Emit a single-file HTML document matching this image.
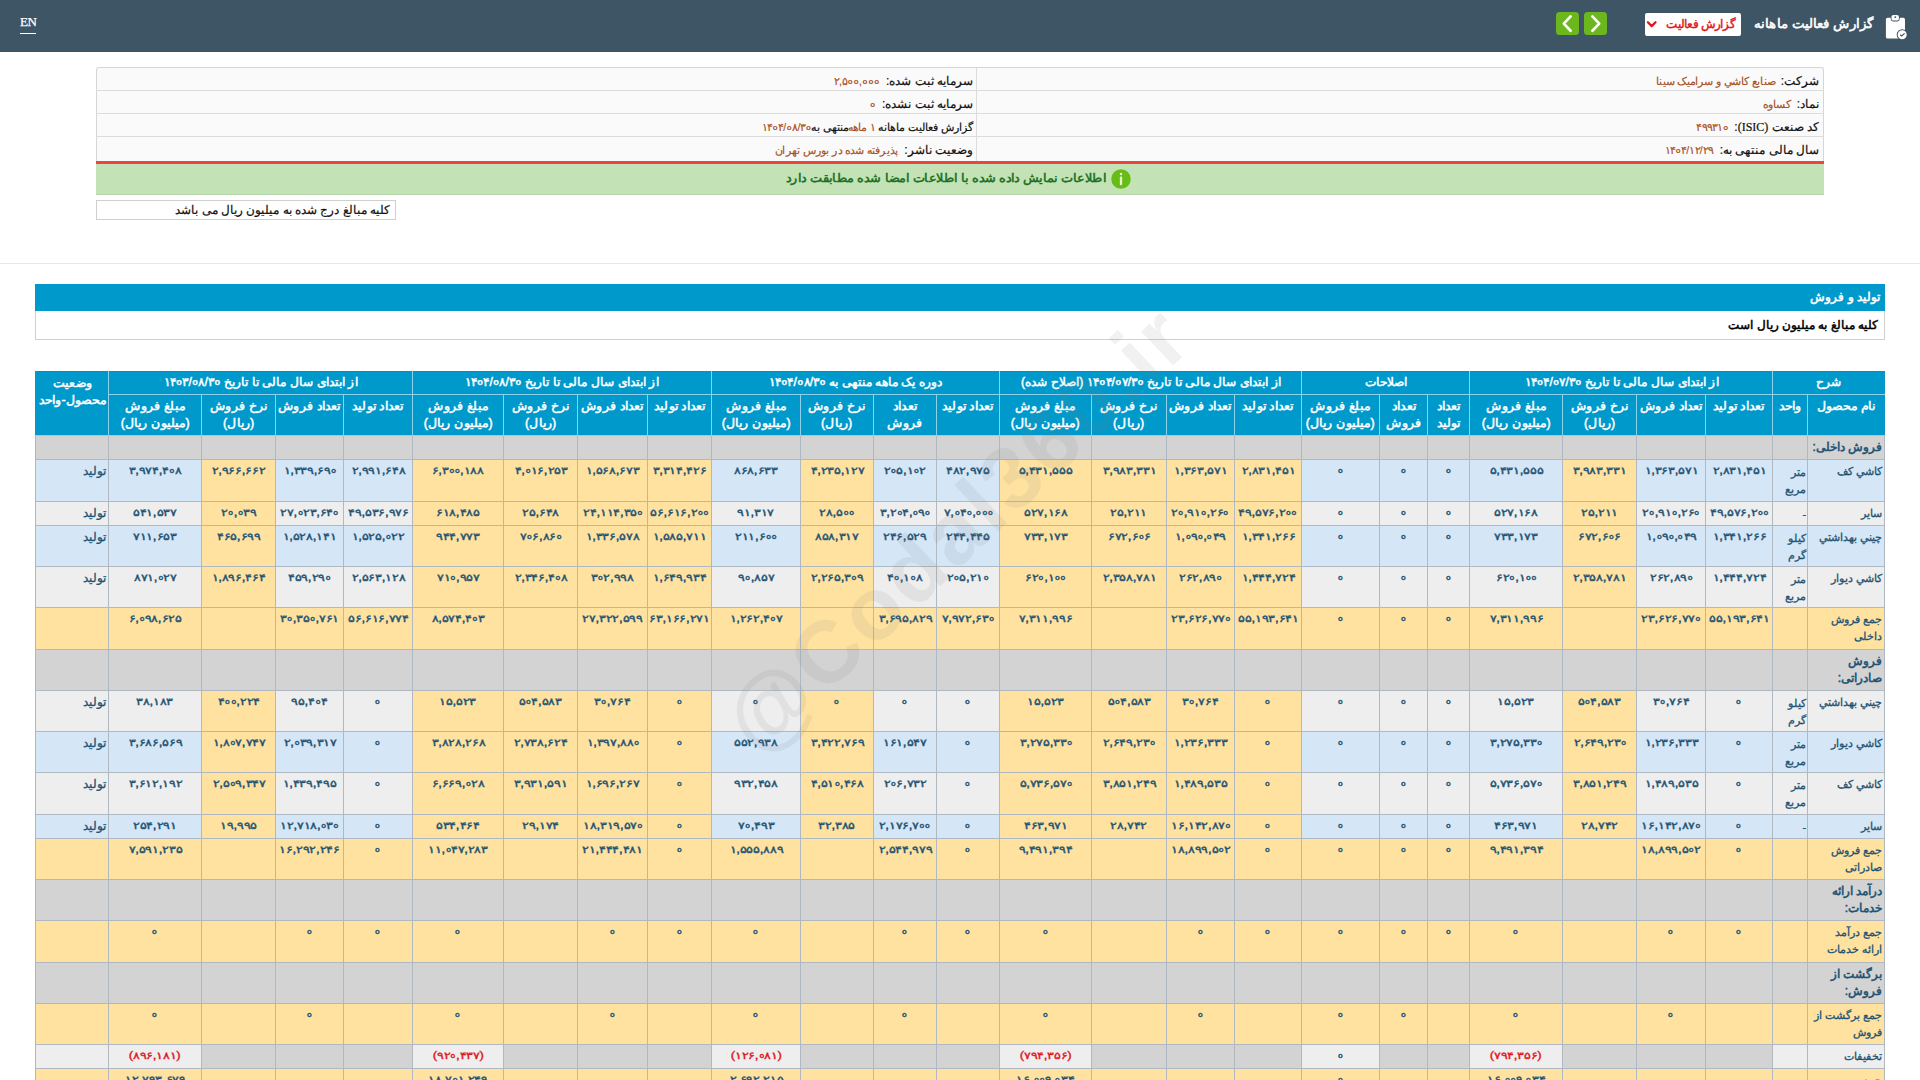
<!DOCTYPE html>
<html lang="fa" dir="rtl">
<head>
<meta charset="utf-8">
<title>گزارش فعالیت ماهانه</title>
<style>
html,body{margin:0;padding:0;}
body{width:1920px;height:1080px;overflow:hidden;background:#fff;position:relative;
  font-family:"Liberation Sans",sans-serif;direction:rtl;color:#000;}
.abs{position:absolute;box-sizing:border-box;}
#bar{left:0;top:0;width:1920px;height:52px;background:#3d5564;}
#en{left:20px;top:15.4px;direction:ltr;font-family:"Liberation Serif",serif;font-size:13px;line-height:14px;color:#fff;
  border-bottom:1px solid #fff;padding-bottom:3.6px;letter-spacing:-0.5px;-webkit-text-stroke:0.25px #fff;}
#title{right:47px;top:11px;height:26px;line-height:25px;font-size:13px;transform:scaleX(1.025);transform-origin:100% 50%;font-weight:normal;-webkit-text-stroke:0.55px #fff;color:#fff;white-space:nowrap;}
#dd{left:1645px;top:13px;width:96px;height:23px;background:#fff;border-radius:2px;color:#e0161c;font-size:11px;-webkit-text-stroke:0.4px #e0161c;
  line-height:22px;white-space:nowrap;text-align:right;padding-right:6px;}
.btn{top:12px;width:23px;height:23px;background:#6cb61e;border-radius:3px;}
#dd span{display:inline-block;transform:scale(1.06);transform-origin:100% 55%;}
.btn{border-radius:3.5px;}
#info{left:96px;top:67px;width:1728px;height:94px;background:#fafafa;border:1px solid #d6d6d6;border-bottom:none;border-radius:3px 3px 0 0;}
.il{left:96px;width:1728px;height:1px;background:#dcdcdc;}
.iv{position:absolute;white-space:nowrap;font-size:12px;line-height:26px;height:23px;color:#111;-webkit-text-stroke:0.2px #111;}
.iv b{font-weight:normal;color:#a8501f;-webkit-text-stroke:0.15px #a8501f;font-size:10px;margin-right:6px;display:inline-block;transform:scale(1.05);transform-origin:100% 60%;}
#red{left:96px;top:161px;width:1728px;height:3px;background:#e8463f;}
#green{left:96px;top:164px;width:1728px;height:31px;background:#c3e3b6;border-bottom:1px solid #b5d3a9;}
#gtxt{right:814px;top:164px;height:30px;line-height:29.5px;text-align:right;font-size:12px;transform:scaleX(1.07);transform-origin:100% 50%;font-weight:normal;-webkit-text-stroke:0.5px #1b6f1f;color:#1b6f1f;white-space:nowrap;}
#note{left:96px;top:200px;width:300px;height:20px;border:1px solid #cfcfcf;background:#fff;font-size:12px;line-height:18px;
  padding-right:5px;white-space:nowrap;text-align:right;color:#111;-webkit-text-stroke:0.2px #111;}
#hr{left:0;top:263px;width:1920px;height:1px;background:#e8e8e8;}
#sect{left:35px;top:284px;width:1850px;height:27px;background:#0099cc;color:#fff;font-weight:normal;-webkit-text-stroke:0.55px #fff;font-size:12px;
  line-height:27px;padding-right:5px;text-align:right;white-space:nowrap;}
#sub{left:35px;top:311px;width:1850px;height:29px;background:#fff;border:1px solid #cfcfcf;border-top:none;color:#000;font-weight:normal;-webkit-text-stroke:0.5px #000;
  font-size:12px;line-height:28px;padding-right:6px;text-align:right;white-space:nowrap;}
#tbl{position:absolute;left:35px;top:371px;width:1850px;table-layout:fixed;border-collapse:collapse;direction:rtl;}
#tbl th,#tbl td{box-sizing:border-box;padding:0;overflow:hidden;white-space:nowrap;}
#tbl th{background:#0099cc;color:#fff;font-weight:normal;-webkit-text-stroke:0.5px #fff;font-size:12px;line-height:17px;text-align:center;vertical-align:middle;
  border:1px solid #8fd0ea;padding:0;}
#tbl th.vt{vertical-align:top;padding-top:3px;}
#tbl th .h{display:inline-block;transform:scaleX(1.015);}
#tbl th.vt .h{transform:scaleX(1.04);}
#tbl thead tr:first-child th{border-top-color:#1987b3;}
#tbl thead tr:first-child th:not(.vt) .h{position:relative;top:-1px;}
#tbl thead th:first-child{border-right-color:#0d93c4;}
#tbl thead tr:first-child th:last-child{border-left-color:#0d93c4;}
#tbl td{border:1px solid #b0b8c1;color:#1d5273;font-size:12px;-webkit-text-stroke:0.3px #1d5273;line-height:17px;vertical-align:top;text-align:center;padding-top:3px;}
#tbl td.nm,#tbl td.sn{text-align:right;padding-right:2px;font-size:11px;}
#tbl td.sn{font-weight:normal;font-size:12px;-webkit-text-stroke:0.55px #1d5273;}
#tbl td.un{text-align:right;padding-right:1px;padding-top:4px;font-size:11px;}
#tbl td.st{text-align:right;padding-right:2px;font-size:12px;}
#tbl td.n bdo{-webkit-text-stroke:0.45px #1d5273;display:inline-block;transform:scale(1.1,0.87);transform-origin:50% 37%;}
#tbl td.r bdo{color:#e0141b;-webkit-text-stroke:0.4px #e0141b;}
.z{font-size:0;line-height:0;font-style:normal;-webkit-text-stroke:0;}
.z::before{content:"o";display:inline-block;font:bold 7.8px/0 "Liberation Sans",sans-serif;vertical-align:2.1px;
  transform:scale(.91,1.15);margin:0 .25px;-webkit-text-stroke:0.25px currentColor;}
.zr::before{transform:none;font-size:9px;vertical-align:1.0px;margin:0 .5px;}
.iv .zr::before{font-size:7.6px;vertical-align:1.4px;-webkit-text-stroke:0;}
#wm{position:absolute;left:957px;top:529px;width:0;height:0;direction:ltr;pointer-events:none;
  font-weight:bold;font-size:88px;line-height:0;letter-spacing:3.5px;color:rgba(128,128,128,0.11);white-space:nowrap;
  transform:rotate(-43.5deg);display:flex;justify-content:center;align-items:center;}

</style>
</head>
<body>
<div id="bar" class="abs"></div>
<div id="en" class="abs">EN</div>
<svg class="abs" style="left:1880px;top:10px" width="36" height="34" viewBox="0 0 36 34">
  <rect x="5.9" y="7.85" width="19.1" height="20.75" rx="1.7" fill="#fff"/>
  <rect x="10.7" y="4.1" width="9" height="7.3" rx="2.4" fill="#3d5564"/>
  <rect x="11.5" y="4.9" width="7.4" height="5.7" rx="1.9" fill="#fff"/>
  <circle cx="15.3" cy="7.1" r="0.95" fill="#3d5564"/>
  <circle cx="22.2" cy="24.7" r="5.5" fill="#3d5564"/>
  <circle cx="22.2" cy="24.7" r="4.5" fill="#fff"/>
  <path d="M20.1 24.7 L21.7 25.9 L24.6 23.4" fill="none" stroke="#3d5564" stroke-width="1.2"/>
</svg>
<div id="title" class="abs">گزارش فعالیت ماهانه</div>
<div id="dd" class="abs"><span>گزارش فعالیت</span></div>
<svg class="abs" style="left:1646px;top:20px" width="12" height="9" viewBox="0 0 12 9"><path d="M1.9 2.3 L5.7 6.1 L9.5 2.3" fill="none" stroke="#e0161c" stroke-width="2.3" stroke-linecap="round" stroke-linejoin="round"/></svg>
<div class="abs btn" style="left:1584px"></div>
<div class="abs btn" style="left:1556px"></div>
<svg class="abs" style="left:1584px;top:12px" width="23" height="23" viewBox="0 0 23 23"><path d="M8.4 4.4 L15.2 11.6 L8.4 18.8" fill="none" stroke="#fff" stroke-width="2.7" stroke-linecap="round" stroke-linejoin="round"/></svg>
<svg class="abs" style="left:1556px;top:12px" width="23" height="23" viewBox="0 0 23 23"><path d="M14.6 4.4 L7.8 11.6 L14.6 18.8" fill="none" stroke="#fff" stroke-width="2.7" stroke-linecap="round" stroke-linejoin="round"/></svg>

<div id="info" class="abs"></div>
<div class="abs il" style="top:90px"></div>
<div class="abs il" style="top:113px"></div>
<div class="abs il" style="top:136px"></div>
<div class="abs" style="left:976px;top:68px;width:1px;height:93px;background:#dcdcdc"></div>
<div class="iv" style="right:101px;top:68px">شرکت:<b>صنایع کاشي و سرامیک سینا</b></div>
<div class="iv" style="right:101px;top:91px">نماد:<b>کساوه</b></div>
<div class="iv" style="right:101px;top:114px">کد صنعت <span style="font-family:'Liberation Serif',serif">(ISIC)</span>:<b><bdo dir="ltr">۴۹۹۳۱<i class="z zr">۰</i></bdo></b></div>
<div class="iv" style="right:101px;top:137px">سال مالی منتهی به:<b><bdo dir="ltr">۱۴<i class="z zr">۰</i>۴/۱۲/۲۹</bdo></b></div>
<div class="iv" style="right:947px;top:68px">سرمایه ثبت شده:<b><bdo dir="ltr">۲,۵<i class="z zr">۰</i><i class="z zr">۰</i>,<i class="z zr">۰</i><i class="z zr">۰</i><i class="z zr">۰</i></bdo></b></div>
<div class="iv" style="right:947px;top:91px">سرمایه ثبت نشده:<b><bdo dir="ltr"><i class="z zr">۰</i></bdo></b></div>
<div class="iv" style="right:947px;top:114px;font-size:11px">گزارش فعالیت ماهانه <b style="margin:0">۱ ماهه</b>منتهی به<b style="margin:0"><bdo dir="ltr">۱۴<i class="z zr">۰</i>۴/<i class="z zr">۰</i>۸/۳<i class="z zr">۰</i></bdo></b></div>
<div class="iv" style="right:947px;top:137px">وضعیت ناشر:<b>پذیرفته شده در بورس تهران</b></div>
<div id="red" class="abs"></div>
<div id="green" class="abs"></div>
<div id="gtxt" class="abs">اطلاعات نمایش داده شده با اطلاعات امضا شده مطابقت دارد</div>
<svg class="abs" style="left:1111px;top:169px" width="20" height="20" viewBox="0 0 20 20"><circle cx="10" cy="10" r="9.75" fill="#68bc18"/><circle cx="10" cy="4.9" r="1.25" fill="#e4f4cc"/><rect x="8.85" y="7.6" width="2.3" height="8.6" rx="0.9" fill="#e4f4cc"/></svg>
<div id="note" class="abs">کلیه مبالغ درج شده به میلیون ریال می باشد</div>
<div id="hr" class="abs"></div>
<div id="sect" class="abs">تولید و فروش</div>
<div id="sub" class="abs">کلیه مبالغ به میلیون ریال است</div>

<table id="tbl">
<colgroup><col style="width:77px"><col style="width:35px"><col style="width:67px"><col style="width:69px"><col style="width:74px"><col style="width:93px"><col style="width:42px"><col style="width:48px"><col style="width:78px"><col style="width:67px"><col style="width:68px"><col style="width:75px"><col style="width:92px"><col style="width:63px"><col style="width:63px"><col style="width:73px"><col style="width:89px"><col style="width:64px"><col style="width:70px"><col style="width:74px"><col style="width:91px"><col style="width:69px"><col style="width:68px"><col style="width:74px"><col style="width:93px"><col style="width:73px"></colgroup>
<thead>
<tr style="height:23px"><th colspan="2"><span class="h">شرح</span></th><th colspan="4"><span class="h">از ابتدای سال مالی تا تاریخ <bdo dir="ltr">۱۴<i class="z zr">۰</i>۴/<i class="z zr">۰</i>۷/۳<i class="z zr">۰</i></bdo></span></th><th colspan="3"><span class="h">اصلاحات</span></th><th colspan="4"><span class="h">از ابتدای سال مالی تا تاریخ <bdo dir="ltr">۱۴<i class="z zr">۰</i>۴/<i class="z zr">۰</i>۷/۳<i class="z zr">۰</i></bdo> (اصلاح شده)</span></th><th colspan="4"><span class="h">دوره یک ماهه منتهی به <bdo dir="ltr">۱۴<i class="z zr">۰</i>۴/<i class="z zr">۰</i>۸/۳<i class="z zr">۰</i></bdo></span></th><th colspan="4"><span class="h">از ابتدای سال مالی تا تاریخ <bdo dir="ltr">۱۴<i class="z zr">۰</i>۴/<i class="z zr">۰</i>۸/۳<i class="z zr">۰</i></bdo></span></th><th colspan="4"><span class="h">از ابتدای سال مالی تا تاریخ <bdo dir="ltr">۱۴<i class="z zr">۰</i>۳/<i class="z zr">۰</i>۸/۳<i class="z zr">۰</i></bdo></span></th><th rowspan="2" class="vt"><span class="h">وضعیت<br>محصول-واحد</span></th></tr>
<tr style="height:41px"><th class="vt"><span class="h">نام محصول</span></th><th class="vt"><span class="h">واحد</span></th><th class="vt"><span class="h">تعداد تولید</span></th><th class="vt"><span class="h">تعداد فروش</span></th><th class="vt"><span class="h">نرخ فروش<br>(ریال)</span></th><th class="vt"><span class="h">مبلغ فروش<br>(میلیون ریال)</span></th><th class="vt"><span class="h">تعداد<br>تولید</span></th><th class="vt"><span class="h">تعداد<br>فروش</span></th><th class="vt"><span class="h">مبلغ فروش<br>(میلیون ریال)</span></th><th class="vt"><span class="h">تعداد تولید</span></th><th class="vt"><span class="h">تعداد فروش</span></th><th class="vt"><span class="h">نرخ فروش<br>(ریال)</span></th><th class="vt"><span class="h">مبلغ فروش<br>(میلیون ریال)</span></th><th class="vt"><span class="h">تعداد تولید</span></th><th class="vt"><span class="h">تعداد<br>فروش</span></th><th class="vt"><span class="h">نرخ فروش<br>(ریال)</span></th><th class="vt"><span class="h">مبلغ فروش<br>(میلیون ریال)</span></th><th class="vt"><span class="h">تعداد تولید</span></th><th class="vt"><span class="h">تعداد فروش</span></th><th class="vt"><span class="h">نرخ فروش<br>(ریال)</span></th><th class="vt"><span class="h">مبلغ فروش<br>(میلیون ریال)</span></th><th class="vt"><span class="h">تعداد تولید</span></th><th class="vt"><span class="h">تعداد فروش</span></th><th class="vt"><span class="h">نرخ فروش<br>(ریال)</span></th><th class="vt"><span class="h">مبلغ فروش<br>(میلیون ریال)</span></th></tr>
</thead>
<tbody>
<tr style="height:24px"><td class="sn" style="background:#d3d3d3">فروش داخلی:</td><td style="background:#d3d3d3"></td><td style="background:#d3d3d3"></td><td style="background:#d3d3d3"></td><td style="background:#d3d3d3"></td><td style="background:#d3d3d3"></td><td style="background:#d3d3d3"></td><td style="background:#d3d3d3"></td><td style="background:#d3d3d3"></td><td style="background:#d3d3d3"></td><td style="background:#d3d3d3"></td><td style="background:#d3d3d3"></td><td style="background:#d3d3d3"></td><td style="background:#d3d3d3"></td><td style="background:#d3d3d3"></td><td style="background:#d3d3d3"></td><td style="background:#d3d3d3"></td><td style="background:#d3d3d3"></td><td style="background:#d3d3d3"></td><td style="background:#d3d3d3"></td><td style="background:#d3d3d3"></td><td style="background:#d3d3d3"></td><td style="background:#d3d3d3"></td><td style="background:#d3d3d3"></td><td style="background:#d3d3d3"></td><td style="background:#d3d3d3"></td></tr>
<tr style="height:42px"><td class="nm" style="background:#d5e6f6">کاشي کف</td><td class="un" style="background:#d5e6f6">متر<br>مربع</td><td class="n" style="background:#d5e6f6"><bdo dir="ltr">۲,۸۳۱,۴۵۱</bdo></td><td class="n" style="background:#d5e6f6"><bdo dir="ltr">۱,۳۶۳,۵۷۱</bdo></td><td class="n" style="background:#ffe2a0"><bdo dir="ltr">۳,۹۸۳,۳۳۱</bdo></td><td class="n" style="background:#d5e6f6"><bdo dir="ltr">۵,۴۳۱,۵۵۵</bdo></td><td class="n" style="background:#d5e6f6"><bdo dir="ltr"><i class="z">۰</i></bdo></td><td class="n" style="background:#d5e6f6"><bdo dir="ltr"><i class="z">۰</i></bdo></td><td class="n" style="background:#d5e6f6"><bdo dir="ltr"><i class="z">۰</i></bdo></td><td class="n" style="background:#ffe2a0"><bdo dir="ltr">۲,۸۳۱,۴۵۱</bdo></td><td class="n" style="background:#ffe2a0"><bdo dir="ltr">۱,۳۶۳,۵۷۱</bdo></td><td class="n" style="background:#ffe2a0"><bdo dir="ltr">۳,۹۸۳,۳۳۱</bdo></td><td class="n" style="background:#ffe2a0"><bdo dir="ltr">۵,۴۳۱,۵۵۵</bdo></td><td class="n" style="background:#d5e6f6"><bdo dir="ltr">۴۸۲,۹۷۵</bdo></td><td class="n" style="background:#d5e6f6"><bdo dir="ltr">۲<i class="z">۰</i>۵,۱<i class="z">۰</i>۲</bdo></td><td class="n" style="background:#ffe2a0"><bdo dir="ltr">۴,۲۳۵,۱۲۷</bdo></td><td class="n" style="background:#d5e6f6"><bdo dir="ltr">۸۶۸,۶۳۳</bdo></td><td class="n" style="background:#ffe2a0"><bdo dir="ltr">۳,۳۱۴,۴۲۶</bdo></td><td class="n" style="background:#ffe2a0"><bdo dir="ltr">۱,۵۶۸,۶۷۳</bdo></td><td class="n" style="background:#ffe2a0"><bdo dir="ltr">۴,<i class="z">۰</i>۱۶,۲۵۳</bdo></td><td class="n" style="background:#ffe2a0"><bdo dir="ltr">۶,۳<i class="z">۰</i><i class="z">۰</i>,۱۸۸</bdo></td><td class="n" style="background:#d5e6f6"><bdo dir="ltr">۲,۹۹۱,۶۴۸</bdo></td><td class="n" style="background:#d5e6f6"><bdo dir="ltr">۱,۳۳۹,۶۹<i class="z">۰</i></bdo></td><td class="n" style="background:#ffe2a0"><bdo dir="ltr">۲,۹۶۶,۶۶۲</bdo></td><td class="n" style="background:#d5e6f6"><bdo dir="ltr">۳,۹۷۴,۴<i class="z">۰</i>۸</bdo></td><td class="st" style="background:#d5e6f6">تولید</td></tr>
<tr style="height:24px"><td class="nm" style="background:#eeeeee">سایر</td><td class="un" style="background:#eeeeee">-</td><td class="n" style="background:#eeeeee"><bdo dir="ltr">۴۹,۵۷۶,۲<i class="z">۰</i><i class="z">۰</i></bdo></td><td class="n" style="background:#eeeeee"><bdo dir="ltr">۲<i class="z">۰</i>,۹۱<i class="z">۰</i>,۲۶<i class="z">۰</i></bdo></td><td class="n" style="background:#ffe2a0"><bdo dir="ltr">۲۵,۲۱۱</bdo></td><td class="n" style="background:#eeeeee"><bdo dir="ltr">۵۲۷,۱۶۸</bdo></td><td class="n" style="background:#eeeeee"><bdo dir="ltr"><i class="z">۰</i></bdo></td><td class="n" style="background:#eeeeee"><bdo dir="ltr"><i class="z">۰</i></bdo></td><td class="n" style="background:#eeeeee"><bdo dir="ltr"><i class="z">۰</i></bdo></td><td class="n" style="background:#ffe2a0"><bdo dir="ltr">۴۹,۵۷۶,۲<i class="z">۰</i><i class="z">۰</i></bdo></td><td class="n" style="background:#ffe2a0"><bdo dir="ltr">۲<i class="z">۰</i>,۹۱<i class="z">۰</i>,۲۶<i class="z">۰</i></bdo></td><td class="n" style="background:#ffe2a0"><bdo dir="ltr">۲۵,۲۱۱</bdo></td><td class="n" style="background:#ffe2a0"><bdo dir="ltr">۵۲۷,۱۶۸</bdo></td><td class="n" style="background:#eeeeee"><bdo dir="ltr">۷,<i class="z">۰</i>۴<i class="z">۰</i>,<i class="z">۰</i><i class="z">۰</i><i class="z">۰</i></bdo></td><td class="n" style="background:#eeeeee"><bdo dir="ltr">۳,۲<i class="z">۰</i>۴,<i class="z">۰</i>۹<i class="z">۰</i></bdo></td><td class="n" style="background:#ffe2a0"><bdo dir="ltr">۲۸,۵<i class="z">۰</i><i class="z">۰</i></bdo></td><td class="n" style="background:#eeeeee"><bdo dir="ltr">۹۱,۳۱۷</bdo></td><td class="n" style="background:#ffe2a0"><bdo dir="ltr">۵۶,۶۱۶,۲<i class="z">۰</i><i class="z">۰</i></bdo></td><td class="n" style="background:#ffe2a0"><bdo dir="ltr">۲۴,۱۱۴,۳۵<i class="z">۰</i></bdo></td><td class="n" style="background:#ffe2a0"><bdo dir="ltr">۲۵,۶۴۸</bdo></td><td class="n" style="background:#ffe2a0"><bdo dir="ltr">۶۱۸,۴۸۵</bdo></td><td class="n" style="background:#eeeeee"><bdo dir="ltr">۴۹,۵۳۶,۹۷۶</bdo></td><td class="n" style="background:#eeeeee"><bdo dir="ltr">۲۷,<i class="z">۰</i>۲۳,۶۴<i class="z">۰</i></bdo></td><td class="n" style="background:#ffe2a0"><bdo dir="ltr">۲<i class="z">۰</i>,<i class="z">۰</i>۳۹</bdo></td><td class="n" style="background:#eeeeee"><bdo dir="ltr">۵۴۱,۵۳۷</bdo></td><td class="st" style="background:#eeeeee">تولید</td></tr>
<tr style="height:41px"><td class="nm" style="background:#d5e6f6">چيني بهداشتي</td><td class="un" style="background:#d5e6f6">کیلو<br>گرم</td><td class="n" style="background:#d5e6f6"><bdo dir="ltr">۱,۳۴۱,۲۶۶</bdo></td><td class="n" style="background:#d5e6f6"><bdo dir="ltr">۱,<i class="z">۰</i>۹<i class="z">۰</i>,<i class="z">۰</i>۴۹</bdo></td><td class="n" style="background:#ffe2a0"><bdo dir="ltr">۶۷۲,۶<i class="z">۰</i>۶</bdo></td><td class="n" style="background:#d5e6f6"><bdo dir="ltr">۷۳۳,۱۷۳</bdo></td><td class="n" style="background:#d5e6f6"><bdo dir="ltr"><i class="z">۰</i></bdo></td><td class="n" style="background:#d5e6f6"><bdo dir="ltr"><i class="z">۰</i></bdo></td><td class="n" style="background:#d5e6f6"><bdo dir="ltr"><i class="z">۰</i></bdo></td><td class="n" style="background:#ffe2a0"><bdo dir="ltr">۱,۳۴۱,۲۶۶</bdo></td><td class="n" style="background:#ffe2a0"><bdo dir="ltr">۱,<i class="z">۰</i>۹<i class="z">۰</i>,<i class="z">۰</i>۴۹</bdo></td><td class="n" style="background:#ffe2a0"><bdo dir="ltr">۶۷۲,۶<i class="z">۰</i>۶</bdo></td><td class="n" style="background:#ffe2a0"><bdo dir="ltr">۷۳۳,۱۷۳</bdo></td><td class="n" style="background:#d5e6f6"><bdo dir="ltr">۲۴۴,۴۴۵</bdo></td><td class="n" style="background:#d5e6f6"><bdo dir="ltr">۲۴۶,۵۲۹</bdo></td><td class="n" style="background:#ffe2a0"><bdo dir="ltr">۸۵۸,۳۱۷</bdo></td><td class="n" style="background:#d5e6f6"><bdo dir="ltr">۲۱۱,۶<i class="z">۰</i><i class="z">۰</i></bdo></td><td class="n" style="background:#ffe2a0"><bdo dir="ltr">۱,۵۸۵,۷۱۱</bdo></td><td class="n" style="background:#ffe2a0"><bdo dir="ltr">۱,۳۳۶,۵۷۸</bdo></td><td class="n" style="background:#ffe2a0"><bdo dir="ltr">۷<i class="z">۰</i>۶,۸۶<i class="z">۰</i></bdo></td><td class="n" style="background:#ffe2a0"><bdo dir="ltr">۹۴۴,۷۷۳</bdo></td><td class="n" style="background:#d5e6f6"><bdo dir="ltr">۱,۵۲۵,<i class="z">۰</i>۲۲</bdo></td><td class="n" style="background:#d5e6f6"><bdo dir="ltr">۱,۵۲۸,۱۴۱</bdo></td><td class="n" style="background:#ffe2a0"><bdo dir="ltr">۴۶۵,۶۹۹</bdo></td><td class="n" style="background:#d5e6f6"><bdo dir="ltr">۷۱۱,۶۵۳</bdo></td><td class="st" style="background:#d5e6f6">تولید</td></tr>
<tr style="height:41px"><td class="nm" style="background:#eeeeee">کاشي دیوار</td><td class="un" style="background:#eeeeee">متر<br>مربع</td><td class="n" style="background:#eeeeee"><bdo dir="ltr">۱,۴۴۴,۷۲۴</bdo></td><td class="n" style="background:#eeeeee"><bdo dir="ltr">۲۶۲,۸۹<i class="z">۰</i></bdo></td><td class="n" style="background:#ffe2a0"><bdo dir="ltr">۲,۳۵۸,۷۸۱</bdo></td><td class="n" style="background:#eeeeee"><bdo dir="ltr">۶۲<i class="z">۰</i>,۱<i class="z">۰</i><i class="z">۰</i></bdo></td><td class="n" style="background:#eeeeee"><bdo dir="ltr"><i class="z">۰</i></bdo></td><td class="n" style="background:#eeeeee"><bdo dir="ltr"><i class="z">۰</i></bdo></td><td class="n" style="background:#eeeeee"><bdo dir="ltr"><i class="z">۰</i></bdo></td><td class="n" style="background:#ffe2a0"><bdo dir="ltr">۱,۴۴۴,۷۲۴</bdo></td><td class="n" style="background:#ffe2a0"><bdo dir="ltr">۲۶۲,۸۹<i class="z">۰</i></bdo></td><td class="n" style="background:#ffe2a0"><bdo dir="ltr">۲,۳۵۸,۷۸۱</bdo></td><td class="n" style="background:#ffe2a0"><bdo dir="ltr">۶۲<i class="z">۰</i>,۱<i class="z">۰</i><i class="z">۰</i></bdo></td><td class="n" style="background:#eeeeee"><bdo dir="ltr">۲<i class="z">۰</i>۵,۲۱<i class="z">۰</i></bdo></td><td class="n" style="background:#eeeeee"><bdo dir="ltr">۴<i class="z">۰</i>,۱<i class="z">۰</i>۸</bdo></td><td class="n" style="background:#ffe2a0"><bdo dir="ltr">۲,۲۶۵,۳<i class="z">۰</i>۹</bdo></td><td class="n" style="background:#eeeeee"><bdo dir="ltr">۹<i class="z">۰</i>,۸۵۷</bdo></td><td class="n" style="background:#ffe2a0"><bdo dir="ltr">۱,۶۴۹,۹۳۴</bdo></td><td class="n" style="background:#ffe2a0"><bdo dir="ltr">۳<i class="z">۰</i>۲,۹۹۸</bdo></td><td class="n" style="background:#ffe2a0"><bdo dir="ltr">۲,۳۴۶,۴<i class="z">۰</i>۸</bdo></td><td class="n" style="background:#ffe2a0"><bdo dir="ltr">۷۱<i class="z">۰</i>,۹۵۷</bdo></td><td class="n" style="background:#eeeeee"><bdo dir="ltr">۲,۵۶۳,۱۲۸</bdo></td><td class="n" style="background:#eeeeee"><bdo dir="ltr">۴۵۹,۲۹<i class="z">۰</i></bdo></td><td class="n" style="background:#ffe2a0"><bdo dir="ltr">۱,۸۹۶,۴۶۴</bdo></td><td class="n" style="background:#eeeeee"><bdo dir="ltr">۸۷۱,<i class="z">۰</i>۲۷</bdo></td><td class="st" style="background:#eeeeee">تولید</td></tr>
<tr style="height:42px"><td class="nm" style="background:#ffe2a0">جمع فروش<br>داخلی</td><td class="un" style="background:#ffe2a0"></td><td class="n" style="background:#ffe2a0"><bdo dir="ltr">۵۵,۱۹۳,۶۴۱</bdo></td><td class="n" style="background:#ffe2a0"><bdo dir="ltr">۲۳,۶۲۶,۷۷<i class="z">۰</i></bdo></td><td class="n" style="background:#ffe2a0"></td><td class="n" style="background:#ffe2a0"><bdo dir="ltr">۷,۳۱۱,۹۹۶</bdo></td><td class="n" style="background:#ffe2a0"><bdo dir="ltr"><i class="z">۰</i></bdo></td><td class="n" style="background:#ffe2a0"><bdo dir="ltr"><i class="z">۰</i></bdo></td><td class="n" style="background:#ffe2a0"><bdo dir="ltr"><i class="z">۰</i></bdo></td><td class="n" style="background:#ffe2a0"><bdo dir="ltr">۵۵,۱۹۳,۶۴۱</bdo></td><td class="n" style="background:#ffe2a0"><bdo dir="ltr">۲۳,۶۲۶,۷۷<i class="z">۰</i></bdo></td><td class="n" style="background:#ffe2a0"></td><td class="n" style="background:#ffe2a0"><bdo dir="ltr">۷,۳۱۱,۹۹۶</bdo></td><td class="n" style="background:#ffe2a0"><bdo dir="ltr">۷,۹۷۲,۶۳<i class="z">۰</i></bdo></td><td class="n" style="background:#ffe2a0"><bdo dir="ltr">۳,۶۹۵,۸۲۹</bdo></td><td class="n" style="background:#ffe2a0"></td><td class="n" style="background:#ffe2a0"><bdo dir="ltr">۱,۲۶۲,۴<i class="z">۰</i>۷</bdo></td><td class="n" style="background:#ffe2a0"><bdo dir="ltr">۶۳,۱۶۶,۲۷۱</bdo></td><td class="n" style="background:#ffe2a0"><bdo dir="ltr">۲۷,۳۲۲,۵۹۹</bdo></td><td class="n" style="background:#ffe2a0"></td><td class="n" style="background:#ffe2a0"><bdo dir="ltr">۸,۵۷۴,۴<i class="z">۰</i>۳</bdo></td><td class="n" style="background:#ffe2a0"><bdo dir="ltr">۵۶,۶۱۶,۷۷۴</bdo></td><td class="n" style="background:#ffe2a0"><bdo dir="ltr">۳<i class="z">۰</i>,۳۵<i class="z">۰</i>,۷۶۱</bdo></td><td class="n" style="background:#ffe2a0"></td><td class="n" style="background:#ffe2a0"><bdo dir="ltr">۶,<i class="z">۰</i>۹۸,۶۲۵</bdo></td><td class="st" style="background:#ffe2a0"></td></tr>
<tr style="height:41px"><td class="sn" style="background:#d3d3d3">فروش<br>صادراتی:</td><td style="background:#d3d3d3"></td><td style="background:#d3d3d3"></td><td style="background:#d3d3d3"></td><td style="background:#d3d3d3"></td><td style="background:#d3d3d3"></td><td style="background:#d3d3d3"></td><td style="background:#d3d3d3"></td><td style="background:#d3d3d3"></td><td style="background:#d3d3d3"></td><td style="background:#d3d3d3"></td><td style="background:#d3d3d3"></td><td style="background:#d3d3d3"></td><td style="background:#d3d3d3"></td><td style="background:#d3d3d3"></td><td style="background:#d3d3d3"></td><td style="background:#d3d3d3"></td><td style="background:#d3d3d3"></td><td style="background:#d3d3d3"></td><td style="background:#d3d3d3"></td><td style="background:#d3d3d3"></td><td style="background:#d3d3d3"></td><td style="background:#d3d3d3"></td><td style="background:#d3d3d3"></td><td style="background:#d3d3d3"></td><td style="background:#d3d3d3"></td></tr>
<tr style="height:41px"><td class="nm" style="background:#eeeeee">چيني بهداشتي</td><td class="un" style="background:#eeeeee">کیلو<br>گرم</td><td class="n" style="background:#eeeeee"><bdo dir="ltr"><i class="z">۰</i></bdo></td><td class="n" style="background:#eeeeee"><bdo dir="ltr">۳<i class="z">۰</i>,۷۶۴</bdo></td><td class="n" style="background:#ffe2a0"><bdo dir="ltr">۵<i class="z">۰</i>۴,۵۸۳</bdo></td><td class="n" style="background:#eeeeee"><bdo dir="ltr">۱۵,۵۲۳</bdo></td><td class="n" style="background:#eeeeee"><bdo dir="ltr"><i class="z">۰</i></bdo></td><td class="n" style="background:#eeeeee"><bdo dir="ltr"><i class="z">۰</i></bdo></td><td class="n" style="background:#eeeeee"><bdo dir="ltr"><i class="z">۰</i></bdo></td><td class="n" style="background:#ffe2a0"><bdo dir="ltr"><i class="z">۰</i></bdo></td><td class="n" style="background:#ffe2a0"><bdo dir="ltr">۳<i class="z">۰</i>,۷۶۴</bdo></td><td class="n" style="background:#ffe2a0"><bdo dir="ltr">۵<i class="z">۰</i>۴,۵۸۳</bdo></td><td class="n" style="background:#ffe2a0"><bdo dir="ltr">۱۵,۵۲۳</bdo></td><td class="n" style="background:#eeeeee"><bdo dir="ltr"><i class="z">۰</i></bdo></td><td class="n" style="background:#eeeeee"><bdo dir="ltr"><i class="z">۰</i></bdo></td><td class="n" style="background:#ffe2a0"><bdo dir="ltr"><i class="z">۰</i></bdo></td><td class="n" style="background:#eeeeee"><bdo dir="ltr"><i class="z">۰</i></bdo></td><td class="n" style="background:#ffe2a0"><bdo dir="ltr"><i class="z">۰</i></bdo></td><td class="n" style="background:#ffe2a0"><bdo dir="ltr">۳<i class="z">۰</i>,۷۶۴</bdo></td><td class="n" style="background:#ffe2a0"><bdo dir="ltr">۵<i class="z">۰</i>۴,۵۸۳</bdo></td><td class="n" style="background:#ffe2a0"><bdo dir="ltr">۱۵,۵۲۳</bdo></td><td class="n" style="background:#eeeeee"><bdo dir="ltr"><i class="z">۰</i></bdo></td><td class="n" style="background:#eeeeee"><bdo dir="ltr">۹۵,۴<i class="z">۰</i>۴</bdo></td><td class="n" style="background:#ffe2a0"><bdo dir="ltr">۴<i class="z">۰</i><i class="z">۰</i>,۲۲۴</bdo></td><td class="n" style="background:#eeeeee"><bdo dir="ltr">۳۸,۱۸۳</bdo></td><td class="st" style="background:#eeeeee">تولید</td></tr>
<tr style="height:41px"><td class="nm" style="background:#d5e6f6">کاشي دیوار</td><td class="un" style="background:#d5e6f6">متر<br>مربع</td><td class="n" style="background:#d5e6f6"><bdo dir="ltr"><i class="z">۰</i></bdo></td><td class="n" style="background:#d5e6f6"><bdo dir="ltr">۱,۲۳۶,۳۳۳</bdo></td><td class="n" style="background:#ffe2a0"><bdo dir="ltr">۲,۶۴۹,۲۳<i class="z">۰</i></bdo></td><td class="n" style="background:#d5e6f6"><bdo dir="ltr">۳,۲۷۵,۳۳<i class="z">۰</i></bdo></td><td class="n" style="background:#d5e6f6"><bdo dir="ltr"><i class="z">۰</i></bdo></td><td class="n" style="background:#d5e6f6"><bdo dir="ltr"><i class="z">۰</i></bdo></td><td class="n" style="background:#d5e6f6"><bdo dir="ltr"><i class="z">۰</i></bdo></td><td class="n" style="background:#ffe2a0"><bdo dir="ltr"><i class="z">۰</i></bdo></td><td class="n" style="background:#ffe2a0"><bdo dir="ltr">۱,۲۳۶,۳۳۳</bdo></td><td class="n" style="background:#ffe2a0"><bdo dir="ltr">۲,۶۴۹,۲۳<i class="z">۰</i></bdo></td><td class="n" style="background:#ffe2a0"><bdo dir="ltr">۳,۲۷۵,۳۳<i class="z">۰</i></bdo></td><td class="n" style="background:#d5e6f6"><bdo dir="ltr"><i class="z">۰</i></bdo></td><td class="n" style="background:#d5e6f6"><bdo dir="ltr">۱۶۱,۵۴۷</bdo></td><td class="n" style="background:#ffe2a0"><bdo dir="ltr">۳,۴۲۲,۷۶۹</bdo></td><td class="n" style="background:#d5e6f6"><bdo dir="ltr">۵۵۲,۹۳۸</bdo></td><td class="n" style="background:#ffe2a0"><bdo dir="ltr"><i class="z">۰</i></bdo></td><td class="n" style="background:#ffe2a0"><bdo dir="ltr">۱,۳۹۷,۸۸<i class="z">۰</i></bdo></td><td class="n" style="background:#ffe2a0"><bdo dir="ltr">۲,۷۳۸,۶۲۴</bdo></td><td class="n" style="background:#ffe2a0"><bdo dir="ltr">۳,۸۲۸,۲۶۸</bdo></td><td class="n" style="background:#d5e6f6"><bdo dir="ltr"><i class="z">۰</i></bdo></td><td class="n" style="background:#d5e6f6"><bdo dir="ltr">۲,<i class="z">۰</i>۳۹,۳۱۷</bdo></td><td class="n" style="background:#ffe2a0"><bdo dir="ltr">۱,۸<i class="z">۰</i>۷,۷۴۷</bdo></td><td class="n" style="background:#d5e6f6"><bdo dir="ltr">۳,۶۸۶,۵۶۹</bdo></td><td class="st" style="background:#d5e6f6">تولید</td></tr>
<tr style="height:42px"><td class="nm" style="background:#eeeeee">کاشي کف</td><td class="un" style="background:#eeeeee">متر<br>مربع</td><td class="n" style="background:#eeeeee"><bdo dir="ltr"><i class="z">۰</i></bdo></td><td class="n" style="background:#eeeeee"><bdo dir="ltr">۱,۴۸۹,۵۳۵</bdo></td><td class="n" style="background:#ffe2a0"><bdo dir="ltr">۳,۸۵۱,۲۴۹</bdo></td><td class="n" style="background:#eeeeee"><bdo dir="ltr">۵,۷۳۶,۵۷<i class="z">۰</i></bdo></td><td class="n" style="background:#eeeeee"><bdo dir="ltr"><i class="z">۰</i></bdo></td><td class="n" style="background:#eeeeee"><bdo dir="ltr"><i class="z">۰</i></bdo></td><td class="n" style="background:#eeeeee"><bdo dir="ltr"><i class="z">۰</i></bdo></td><td class="n" style="background:#ffe2a0"><bdo dir="ltr"><i class="z">۰</i></bdo></td><td class="n" style="background:#ffe2a0"><bdo dir="ltr">۱,۴۸۹,۵۳۵</bdo></td><td class="n" style="background:#ffe2a0"><bdo dir="ltr">۳,۸۵۱,۲۴۹</bdo></td><td class="n" style="background:#ffe2a0"><bdo dir="ltr">۵,۷۳۶,۵۷<i class="z">۰</i></bdo></td><td class="n" style="background:#eeeeee"><bdo dir="ltr"><i class="z">۰</i></bdo></td><td class="n" style="background:#eeeeee"><bdo dir="ltr">۲<i class="z">۰</i>۶,۷۳۲</bdo></td><td class="n" style="background:#ffe2a0"><bdo dir="ltr">۴,۵۱<i class="z">۰</i>,۴۶۸</bdo></td><td class="n" style="background:#eeeeee"><bdo dir="ltr">۹۳۲,۴۵۸</bdo></td><td class="n" style="background:#ffe2a0"><bdo dir="ltr"><i class="z">۰</i></bdo></td><td class="n" style="background:#ffe2a0"><bdo dir="ltr">۱,۶۹۶,۲۶۷</bdo></td><td class="n" style="background:#ffe2a0"><bdo dir="ltr">۳,۹۳۱,۵۹۱</bdo></td><td class="n" style="background:#ffe2a0"><bdo dir="ltr">۶,۶۶۹,<i class="z">۰</i>۲۸</bdo></td><td class="n" style="background:#eeeeee"><bdo dir="ltr"><i class="z">۰</i></bdo></td><td class="n" style="background:#eeeeee"><bdo dir="ltr">۱,۴۳۹,۴۹۵</bdo></td><td class="n" style="background:#ffe2a0"><bdo dir="ltr">۲,۵<i class="z">۰</i>۹,۳۴۷</bdo></td><td class="n" style="background:#eeeeee"><bdo dir="ltr">۳,۶۱۲,۱۹۲</bdo></td><td class="st" style="background:#eeeeee">تولید</td></tr>
<tr style="height:24px"><td class="nm" style="background:#d5e6f6">سایر</td><td class="un" style="background:#d5e6f6">-</td><td class="n" style="background:#d5e6f6"><bdo dir="ltr"><i class="z">۰</i></bdo></td><td class="n" style="background:#d5e6f6"><bdo dir="ltr">۱۶,۱۴۲,۸۷<i class="z">۰</i></bdo></td><td class="n" style="background:#ffe2a0"><bdo dir="ltr">۲۸,۷۴۲</bdo></td><td class="n" style="background:#d5e6f6"><bdo dir="ltr">۴۶۳,۹۷۱</bdo></td><td class="n" style="background:#d5e6f6"><bdo dir="ltr"><i class="z">۰</i></bdo></td><td class="n" style="background:#d5e6f6"><bdo dir="ltr"><i class="z">۰</i></bdo></td><td class="n" style="background:#d5e6f6"><bdo dir="ltr"><i class="z">۰</i></bdo></td><td class="n" style="background:#ffe2a0"><bdo dir="ltr"><i class="z">۰</i></bdo></td><td class="n" style="background:#ffe2a0"><bdo dir="ltr">۱۶,۱۴۲,۸۷<i class="z">۰</i></bdo></td><td class="n" style="background:#ffe2a0"><bdo dir="ltr">۲۸,۷۴۲</bdo></td><td class="n" style="background:#ffe2a0"><bdo dir="ltr">۴۶۳,۹۷۱</bdo></td><td class="n" style="background:#d5e6f6"><bdo dir="ltr"><i class="z">۰</i></bdo></td><td class="n" style="background:#d5e6f6"><bdo dir="ltr">۲,۱۷۶,۷<i class="z">۰</i><i class="z">۰</i></bdo></td><td class="n" style="background:#ffe2a0"><bdo dir="ltr">۳۲,۳۸۵</bdo></td><td class="n" style="background:#d5e6f6"><bdo dir="ltr">۷<i class="z">۰</i>,۴۹۳</bdo></td><td class="n" style="background:#ffe2a0"><bdo dir="ltr"><i class="z">۰</i></bdo></td><td class="n" style="background:#ffe2a0"><bdo dir="ltr">۱۸,۳۱۹,۵۷<i class="z">۰</i></bdo></td><td class="n" style="background:#ffe2a0"><bdo dir="ltr">۲۹,۱۷۴</bdo></td><td class="n" style="background:#ffe2a0"><bdo dir="ltr">۵۳۴,۴۶۴</bdo></td><td class="n" style="background:#d5e6f6"><bdo dir="ltr"><i class="z">۰</i></bdo></td><td class="n" style="background:#d5e6f6"><bdo dir="ltr">۱۲,۷۱۸,<i class="z">۰</i>۳<i class="z">۰</i></bdo></td><td class="n" style="background:#ffe2a0"><bdo dir="ltr">۱۹,۹۹۵</bdo></td><td class="n" style="background:#d5e6f6"><bdo dir="ltr">۲۵۴,۲۹۱</bdo></td><td class="st" style="background:#d5e6f6">تولید</td></tr>
<tr style="height:41px"><td class="nm" style="background:#ffe2a0">جمع فروش<br>صادراتی</td><td class="un" style="background:#ffe2a0"></td><td class="n" style="background:#ffe2a0"><bdo dir="ltr"><i class="z">۰</i></bdo></td><td class="n" style="background:#ffe2a0"><bdo dir="ltr">۱۸,۸۹۹,۵<i class="z">۰</i>۲</bdo></td><td class="n" style="background:#ffe2a0"></td><td class="n" style="background:#ffe2a0"><bdo dir="ltr">۹,۴۹۱,۳۹۴</bdo></td><td class="n" style="background:#ffe2a0"><bdo dir="ltr"><i class="z">۰</i></bdo></td><td class="n" style="background:#ffe2a0"><bdo dir="ltr"><i class="z">۰</i></bdo></td><td class="n" style="background:#ffe2a0"><bdo dir="ltr"><i class="z">۰</i></bdo></td><td class="n" style="background:#ffe2a0"><bdo dir="ltr"><i class="z">۰</i></bdo></td><td class="n" style="background:#ffe2a0"><bdo dir="ltr">۱۸,۸۹۹,۵<i class="z">۰</i>۲</bdo></td><td class="n" style="background:#ffe2a0"></td><td class="n" style="background:#ffe2a0"><bdo dir="ltr">۹,۴۹۱,۳۹۴</bdo></td><td class="n" style="background:#ffe2a0"><bdo dir="ltr"><i class="z">۰</i></bdo></td><td class="n" style="background:#ffe2a0"><bdo dir="ltr">۲,۵۴۴,۹۷۹</bdo></td><td class="n" style="background:#ffe2a0"></td><td class="n" style="background:#ffe2a0"><bdo dir="ltr">۱,۵۵۵,۸۸۹</bdo></td><td class="n" style="background:#ffe2a0"><bdo dir="ltr"><i class="z">۰</i></bdo></td><td class="n" style="background:#ffe2a0"><bdo dir="ltr">۲۱,۴۴۴,۴۸۱</bdo></td><td class="n" style="background:#ffe2a0"></td><td class="n" style="background:#ffe2a0"><bdo dir="ltr">۱۱,<i class="z">۰</i>۴۷,۲۸۳</bdo></td><td class="n" style="background:#ffe2a0"><bdo dir="ltr"><i class="z">۰</i></bdo></td><td class="n" style="background:#ffe2a0"><bdo dir="ltr">۱۶,۲۹۲,۲۴۶</bdo></td><td class="n" style="background:#ffe2a0"></td><td class="n" style="background:#ffe2a0"><bdo dir="ltr">۷,۵۹۱,۲۳۵</bdo></td><td class="st" style="background:#ffe2a0"></td></tr>
<tr style="height:41px"><td class="sn" style="background:#d3d3d3">درآمد ارائه<br>خدمات:</td><td style="background:#d3d3d3"></td><td style="background:#d3d3d3"></td><td style="background:#d3d3d3"></td><td style="background:#d3d3d3"></td><td style="background:#d3d3d3"></td><td style="background:#d3d3d3"></td><td style="background:#d3d3d3"></td><td style="background:#d3d3d3"></td><td style="background:#d3d3d3"></td><td style="background:#d3d3d3"></td><td style="background:#d3d3d3"></td><td style="background:#d3d3d3"></td><td style="background:#d3d3d3"></td><td style="background:#d3d3d3"></td><td style="background:#d3d3d3"></td><td style="background:#d3d3d3"></td><td style="background:#d3d3d3"></td><td style="background:#d3d3d3"></td><td style="background:#d3d3d3"></td><td style="background:#d3d3d3"></td><td style="background:#d3d3d3"></td><td style="background:#d3d3d3"></td><td style="background:#d3d3d3"></td><td style="background:#d3d3d3"></td><td style="background:#d3d3d3"></td></tr>
<tr style="height:42px"><td class="nm" style="background:#ffe2a0">جمع درآمد<br>ارائه خدمات</td><td class="un" style="background:#ffe2a0"></td><td class="n" style="background:#ffe2a0"><bdo dir="ltr"><i class="z">۰</i></bdo></td><td class="n" style="background:#ffe2a0"><bdo dir="ltr"><i class="z">۰</i></bdo></td><td class="n" style="background:#ffe2a0"></td><td class="n" style="background:#ffe2a0"><bdo dir="ltr"><i class="z">۰</i></bdo></td><td class="n" style="background:#ffe2a0"><bdo dir="ltr"><i class="z">۰</i></bdo></td><td class="n" style="background:#ffe2a0"><bdo dir="ltr"><i class="z">۰</i></bdo></td><td class="n" style="background:#ffe2a0"><bdo dir="ltr"><i class="z">۰</i></bdo></td><td class="n" style="background:#ffe2a0"><bdo dir="ltr"><i class="z">۰</i></bdo></td><td class="n" style="background:#ffe2a0"><bdo dir="ltr"><i class="z">۰</i></bdo></td><td class="n" style="background:#ffe2a0"></td><td class="n" style="background:#ffe2a0"><bdo dir="ltr"><i class="z">۰</i></bdo></td><td class="n" style="background:#ffe2a0"><bdo dir="ltr"><i class="z">۰</i></bdo></td><td class="n" style="background:#ffe2a0"><bdo dir="ltr"><i class="z">۰</i></bdo></td><td class="n" style="background:#ffe2a0"></td><td class="n" style="background:#ffe2a0"><bdo dir="ltr"><i class="z">۰</i></bdo></td><td class="n" style="background:#ffe2a0"><bdo dir="ltr"><i class="z">۰</i></bdo></td><td class="n" style="background:#ffe2a0"><bdo dir="ltr"><i class="z">۰</i></bdo></td><td class="n" style="background:#ffe2a0"></td><td class="n" style="background:#ffe2a0"><bdo dir="ltr"><i class="z">۰</i></bdo></td><td class="n" style="background:#ffe2a0"><bdo dir="ltr"><i class="z">۰</i></bdo></td><td class="n" style="background:#ffe2a0"><bdo dir="ltr"><i class="z">۰</i></bdo></td><td class="n" style="background:#ffe2a0"></td><td class="n" style="background:#ffe2a0"><bdo dir="ltr"><i class="z">۰</i></bdo></td><td class="st" style="background:#ffe2a0"></td></tr>
<tr style="height:41px"><td class="sn" style="background:#d3d3d3">برگشت از<br>فروش:</td><td style="background:#d3d3d3"></td><td style="background:#d3d3d3"></td><td style="background:#d3d3d3"></td><td style="background:#d3d3d3"></td><td style="background:#d3d3d3"></td><td style="background:#d3d3d3"></td><td style="background:#d3d3d3"></td><td style="background:#d3d3d3"></td><td style="background:#d3d3d3"></td><td style="background:#d3d3d3"></td><td style="background:#d3d3d3"></td><td style="background:#d3d3d3"></td><td style="background:#d3d3d3"></td><td style="background:#d3d3d3"></td><td style="background:#d3d3d3"></td><td style="background:#d3d3d3"></td><td style="background:#d3d3d3"></td><td style="background:#d3d3d3"></td><td style="background:#d3d3d3"></td><td style="background:#d3d3d3"></td><td style="background:#d3d3d3"></td><td style="background:#d3d3d3"></td><td style="background:#d3d3d3"></td><td style="background:#d3d3d3"></td><td style="background:#d3d3d3"></td></tr>
<tr style="height:41px"><td class="nm" style="background:#ffe2a0">جمع برگشت از<br>فروش</td><td class="un" style="background:#ffe2a0"></td><td class="n" style="background:#ffe2a0"></td><td class="n" style="background:#ffe2a0"><bdo dir="ltr"><i class="z">۰</i></bdo></td><td class="n" style="background:#ffe2a0"></td><td class="n" style="background:#ffe2a0"><bdo dir="ltr"><i class="z">۰</i></bdo></td><td class="n" style="background:#ffe2a0"></td><td class="n" style="background:#ffe2a0"><bdo dir="ltr"><i class="z">۰</i></bdo></td><td class="n" style="background:#ffe2a0"><bdo dir="ltr"><i class="z">۰</i></bdo></td><td class="n" style="background:#ffe2a0"></td><td class="n" style="background:#ffe2a0"><bdo dir="ltr"><i class="z">۰</i></bdo></td><td class="n" style="background:#ffe2a0"></td><td class="n" style="background:#ffe2a0"><bdo dir="ltr"><i class="z">۰</i></bdo></td><td class="n" style="background:#ffe2a0"></td><td class="n" style="background:#ffe2a0"><bdo dir="ltr"><i class="z">۰</i></bdo></td><td class="n" style="background:#ffe2a0"></td><td class="n" style="background:#ffe2a0"><bdo dir="ltr"><i class="z">۰</i></bdo></td><td class="n" style="background:#ffe2a0"></td><td class="n" style="background:#ffe2a0"><bdo dir="ltr"><i class="z">۰</i></bdo></td><td class="n" style="background:#ffe2a0"></td><td class="n" style="background:#ffe2a0"><bdo dir="ltr"><i class="z">۰</i></bdo></td><td class="n" style="background:#ffe2a0"></td><td class="n" style="background:#ffe2a0"><bdo dir="ltr"><i class="z">۰</i></bdo></td><td class="n" style="background:#ffe2a0"></td><td class="n" style="background:#ffe2a0"><bdo dir="ltr"><i class="z">۰</i></bdo></td><td class="st" style="background:#ffe2a0"></td></tr>
<tr style="height:24px"><td class="nm" style="background:#eeeeee">تخفیفات</td><td class="un" style="background:#eeeeee"></td><td class="n" style="background:#d3d3d3"></td><td class="n" style="background:#d3d3d3"></td><td class="n" style="background:#d3d3d3"></td><td class="n r" style="background:#eeeeee"><bdo dir="ltr">(۷۹۴,۳۵۶)</bdo></td><td class="n" style="background:#d3d3d3"></td><td class="n" style="background:#d3d3d3"></td><td class="n" style="background:#eeeeee"><bdo dir="ltr"><i class="z">۰</i></bdo></td><td class="n" style="background:#d3d3d3"></td><td class="n" style="background:#d3d3d3"></td><td class="n" style="background:#d3d3d3"></td><td class="n r" style="background:#eeeeee"><bdo dir="ltr">(۷۹۴,۳۵۶)</bdo></td><td class="n" style="background:#d3d3d3"></td><td class="n" style="background:#d3d3d3"></td><td class="n" style="background:#d3d3d3"></td><td class="n r" style="background:#eeeeee"><bdo dir="ltr">(۱۲۶,<i class="z">۰</i>۸۱)</bdo></td><td class="n" style="background:#d3d3d3"></td><td class="n" style="background:#d3d3d3"></td><td class="n" style="background:#d3d3d3"></td><td class="n r" style="background:#eeeeee"><bdo dir="ltr">(۹۲<i class="z">۰</i>,۴۳۷)</bdo></td><td class="n" style="background:#d3d3d3"></td><td class="n" style="background:#d3d3d3"></td><td class="n" style="background:#d3d3d3"></td><td class="n r" style="background:#eeeeee"><bdo dir="ltr">(۸۹۶,۱۸۱)</bdo></td><td class="st" style="background:#eeeeee"></td></tr>
<tr style="height:26px"><td class="nm" style="background:#ffe2a0">جمع</td><td class="un" style="background:#ffe2a0"></td><td class="n" style="background:#ffe2a0"></td><td class="n" style="background:#ffe2a0"></td><td class="n" style="background:#ffe2a0"></td><td class="n" style="background:#ffe2a0"><bdo dir="ltr">۱۶,<i class="z">۰</i><i class="z">۰</i>۹,<i class="z">۰</i>۳۴</bdo></td><td class="n" style="background:#ffe2a0"></td><td class="n" style="background:#ffe2a0"></td><td class="n" style="background:#ffe2a0"><bdo dir="ltr"><i class="z">۰</i></bdo></td><td class="n" style="background:#ffe2a0"></td><td class="n" style="background:#ffe2a0"></td><td class="n" style="background:#ffe2a0"></td><td class="n" style="background:#ffe2a0"><bdo dir="ltr">۱۶,<i class="z">۰</i><i class="z">۰</i>۹,<i class="z">۰</i>۳۴</bdo></td><td class="n" style="background:#ffe2a0"></td><td class="n" style="background:#ffe2a0"></td><td class="n" style="background:#ffe2a0"></td><td class="n" style="background:#ffe2a0"><bdo dir="ltr">۲,۶۹۲,۲۱۵</bdo></td><td class="n" style="background:#ffe2a0"></td><td class="n" style="background:#ffe2a0"></td><td class="n" style="background:#ffe2a0"></td><td class="n" style="background:#ffe2a0"><bdo dir="ltr">۱۸,۷<i class="z">۰</i>۱,۲۴۹</bdo></td><td class="n" style="background:#ffe2a0"></td><td class="n" style="background:#ffe2a0"></td><td class="n" style="background:#ffe2a0"></td><td class="n" style="background:#ffe2a0"><bdo dir="ltr">۱۲,۷۹۳,۶۷۹</bdo></td><td class="st" style="background:#ffe2a0"></td></tr>
</tbody>
</table>
<div id="wm">@Codal360.ir</div>
</body>
</html>
